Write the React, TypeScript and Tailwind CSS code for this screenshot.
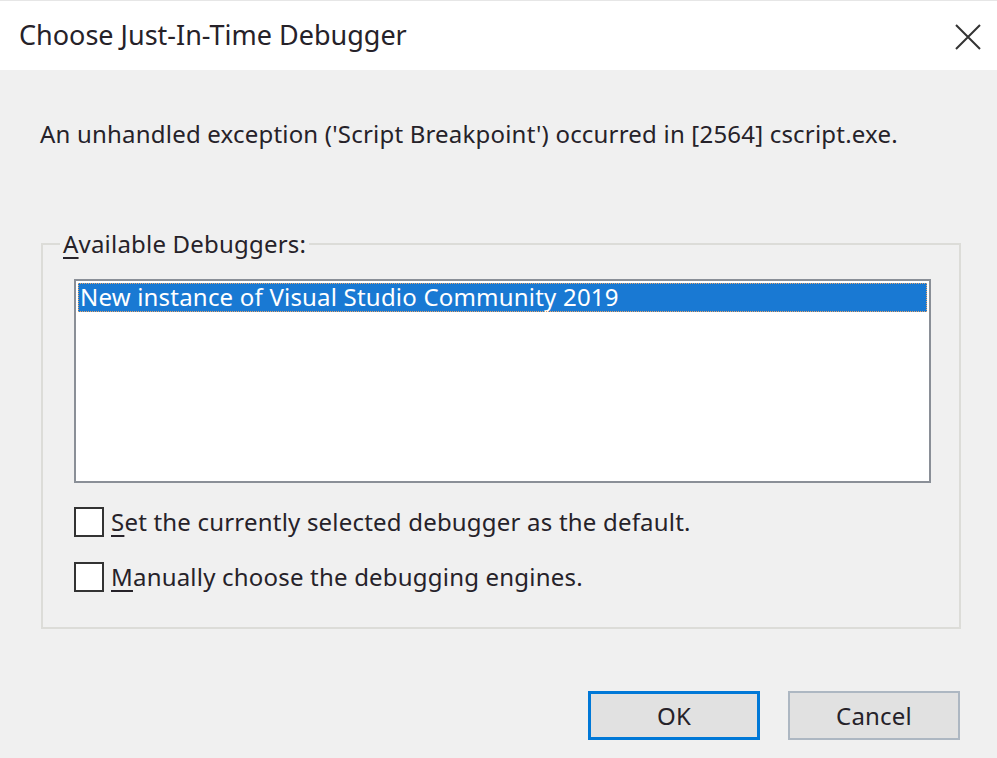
import React, { useState } from 'react';

const font = { fontFamily: '"Noto Sans", "Open Sans", sans-serif' };

const Check: React.FC<{ checked: boolean; onToggle: () => void; children: React.ReactNode }> = ({ checked, onToggle, children }) => (
  <label className="flex items-center gap-[7px] cursor-default select-none" onClick={onToggle}>
    <span className="w-[30px] h-[30px] border-2 border-[#333333] bg-white flex items-center justify-center shrink-0">
      {checked && (
        <svg width="20" height="20" viewBox="0 0 20 20">
          <path d="M3 10l5 5 9-10" fill="none" stroke="#333" strokeWidth="2.5" />
        </svg>
      )}
    </span>
    <span className="leading-[30px]">{children}</span>
  </label>
);

export default function App() {
  const [setDefault, setSetDefault] = useState(false);
  const [manual, setManual] = useState(false);

  return (
    <div className="w-[997px] h-[758px] bg-[#f0f0f0] text-[#262229] text-[24px] tracking-[0.2px] flex flex-col overflow-hidden" style={font}>
      {/* Title bar */}
      <div className="h-[70px] bg-white border-t border-[#e6e6e6] flex items-center justify-between pl-[19px] pr-[16px] shrink-0">
        <span className="text-[27px] tracking-normal">Choose Just-In-Time Debugger</span>
        <svg width="26" height="26" viewBox="0 0 26 26" className="mt-[2px]">
          <path d="M1 1L25 25M25 1L1 25" stroke="#333" strokeWidth="2" />
        </svg>
      </div>

      {/* Body */}
      <div className="flex flex-col pl-[40px] pr-[36px] pt-[49px]">
        <p className="leading-[30px]">An unhandled exception ('Script Breakpoint') occurred in [2564] cscript.exe.</p>

        <fieldset className="mt-[80px] ml-px border-2 border-[#dcdcd8] h-[400px] p-0">
          <legend className="ml-[17px] px-[3px] leading-[30px]">
            <span className="underline underline-offset-[4px]">A</span>vailable Debuggers:
          </legend>

          <div className="pl-[31px] pr-[28px]">
            <div className="mt-[20px] h-[204px] border-2 border-[#8a8f97] bg-white p-[2px]">
              <div className="h-[29px] bg-[#1979d3] text-white leading-[28px] pl-[2px] outline-1 outline-dotted outline-[#e6a56a] -outline-offset-1">
                New instance of Visual Studio Community 2019
              </div>
            </div>

            <div className="mt-[24px] flex flex-col gap-[25px]">
              <Check checked={setDefault} onToggle={() => setSetDefault(!setDefault)}>
                <span className="underline underline-offset-[4px]">S</span>et the currently selected debugger as the default.
              </Check>
              <Check checked={manual} onToggle={() => setManual(!manual)}>
                <span className="underline underline-offset-[4px]">M</span>anually choose the debugging engines.
              </Check>
            </div>
          </div>
        </fieldset>

        <div className="flex justify-end gap-[28px] mt-[62px] mr-px">
          <button className="w-[172px] h-[49px] bg-[#e1e1e1] border-[3px] border-[#0078d7] leading-none">OK</button>
          <button className="w-[172px] h-[49px] bg-[#e1e1e1] border-2 border-[#adb7c2] leading-none">Cancel</button>
        </div>
      </div>
    </div>
  );
}
